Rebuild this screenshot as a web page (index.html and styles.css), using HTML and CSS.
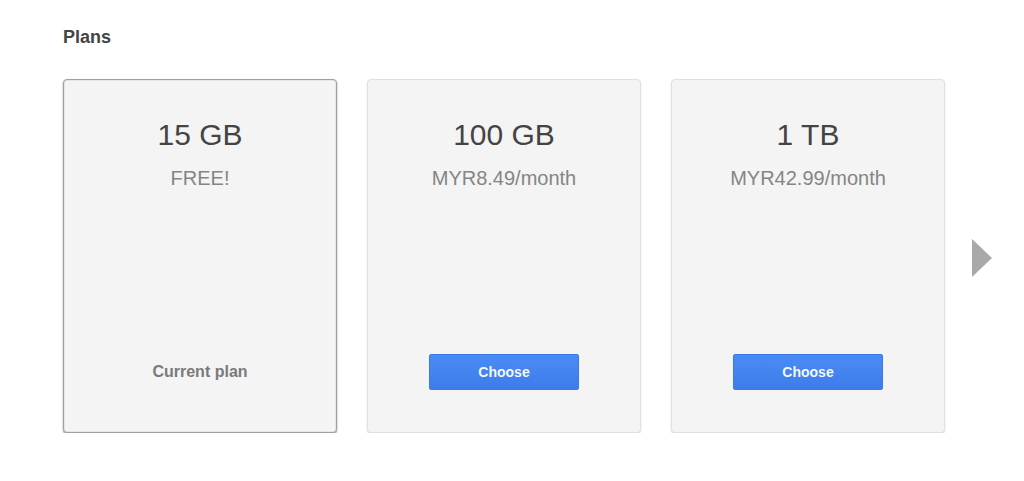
FILE: index.html
```html
<!DOCTYPE html>
<html lang="en">
<head>
    <meta charset="UTF-8">
    <meta name="viewport" content="width=device-width, initial-scale=1.0">
    <title>Plans</title>
    <link rel="stylesheet" href="styles.css">
</head>
<body>
    <div class="page">
        <h2 class="section-title">Plans</h2>

        <div class="plans">
            <!-- Current plan -->
            <div class="plan-card current">
                <div class="plan-size">15 GB</div>
                <div class="plan-price">FREE!</div>
                <div class="plan-action">
                    <span class="current-label">Current plan</span>
                </div>
            </div>

            <div class="plan-card">
                <div class="plan-size">100 GB</div>
                <div class="plan-price">MYR8.49/month</div>
                <div class="plan-action">
                    <button class="choose-btn">Choose</button>
                </div>
            </div>

            <div class="plan-card">
                <div class="plan-size">1 TB</div>
                <div class="plan-price">MYR42.99/month</div>
                <div class="plan-action">
                    <button class="choose-btn">Choose</button>
                </div>
            </div>

            <button class="next-arrow" aria-label="More plans"></button>
        </div>
    </div>
</body>
</html>
```

FILE: styles.css
```css
/* General Styling */
body {
    font-family: Arial, "Liberation Sans", sans-serif;
    margin: 0;
    padding: 0;
    background: #fff;
    color: #333;
}

.page {
    padding: 26px 0 0 63px;
}

.section-title {
    margin: 0;
    font-size: 18px;
    line-height: 22px;
    font-weight: bold;
    color: #444;
}

.plans {
    display: flex;
    align-items: center;
    gap: 30px;
    margin-top: 31px;
}

.plan-card {
    box-sizing: border-box;
    width: 274px;
    height: 354px;
    display: flex;
    flex-direction: column;
    align-items: center;
    padding: 37px 0 42px;
    background: #f4f4f4;
    border: 1px solid #e0e0e0;
    border-radius: 4px;
    box-shadow: 0 1px 2px rgba(0, 0, 0, 0.12);
}

.plan-card.current {
    border: 1px solid #a0a0a0;
    box-shadow: 0 1px 2px rgba(0, 0, 0, 0.4), inset 0 0 0 1px rgba(0, 0, 0, 0.05);
}

.plan-size {
    font-size: 30px;
    line-height: 36px;
    color: #444;
}

.plan-price {
    margin-top: 13px;
    font-size: 20px;
    line-height: 24px;
    color: #858585;
}

.plan-action {
    margin-top: auto;
    height: 36px;
    display: flex;
    align-items: center;
    justify-content: center;
}

.current-label {
    font-size: 16px;
    font-weight: bold;
    color: #7a7a7a;
}

.choose-btn {
    width: 150px;
    height: 36px;
    font-family: Arial, "Liberation Sans", sans-serif;
    font-size: 14px;
    font-weight: bold;
    color: #f4f8ff;
    background: linear-gradient(to bottom, #4a8cf6, #3d7ce9);
    border: 1px solid #3b78e0;
    border-radius: 2px;
    cursor: pointer;
}

.next-arrow {
    width: 0;
    height: 0;
    padding: 0;
    margin-left: -3px;
    margin-top: 4px;
    background: none;
    border-style: solid;
    border-width: 19px 0 19px 20px;
    border-color: transparent transparent transparent #a9a9a9;
    cursor: pointer;
}
```
